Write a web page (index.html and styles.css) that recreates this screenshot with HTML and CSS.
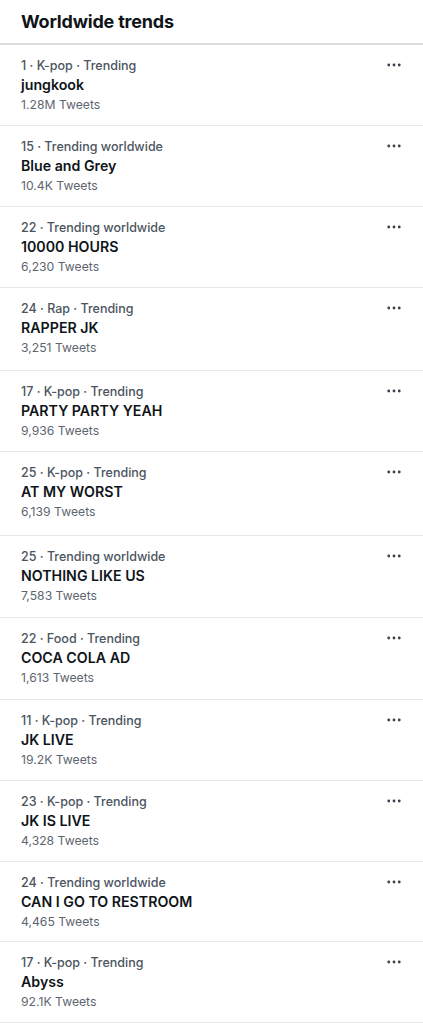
FILE: index.html
```html
<!DOCTYPE html>
<html lang="en">
<head>
    <meta charset="UTF-8">
    <meta name="viewport" content="width=device-width, initial-scale=1.0">
    <title>Worldwide trends</title>
    <link rel="stylesheet" href="styles.css">
</head>
<body>
    <div class="container">
        <div class="header">
            <h1>Worldwide trends</h1>
        </div>
        <div class="trends">
            <div class="trend">
                <div class="info">
                    <span class="meta">1 · K-pop · Trending</span>
                    <span class="name">jungkook</span>
                    <span class="count">1.28M Tweets</span>
                </div>
                <svg class="more" viewBox="0 0 16 4"><circle cx="2" cy="2" r="1.6"/><circle cx="8" cy="2" r="1.6"/><circle cx="14" cy="2" r="1.6"/></svg>
            </div>
            <div class="trend">
                <div class="info">
                    <span class="meta">15 · Trending worldwide</span>
                    <span class="name">Blue and Grey</span>
                    <span class="count">10.4K Tweets</span>
                </div>
                <svg class="more" viewBox="0 0 16 4"><circle cx="2" cy="2" r="1.6"/><circle cx="8" cy="2" r="1.6"/><circle cx="14" cy="2" r="1.6"/></svg>
            </div>
            <div class="trend">
                <div class="info">
                    <span class="meta">22 · Trending worldwide</span>
                    <span class="name">10000 HOURS</span>
                    <span class="count">6,230 Tweets</span>
                </div>
                <svg class="more" viewBox="0 0 16 4"><circle cx="2" cy="2" r="1.6"/><circle cx="8" cy="2" r="1.6"/><circle cx="14" cy="2" r="1.6"/></svg>
            </div>
            <div class="trend tall">
                <div class="info">
                    <span class="meta">24 · Rap · Trending</span>
                    <span class="name">RAPPER JK</span>
                    <span class="count">3,251 Tweets</span>
                </div>
                <svg class="more" viewBox="0 0 16 4"><circle cx="2" cy="2" r="1.6"/><circle cx="8" cy="2" r="1.6"/><circle cx="14" cy="2" r="1.6"/></svg>
            </div>
            <div class="trend">
                <div class="info">
                    <span class="meta">17 · K-pop · Trending</span>
                    <span class="name">PARTY PARTY YEAH</span>
                    <span class="count">9,936 Tweets</span>
                </div>
                <svg class="more" viewBox="0 0 16 4"><circle cx="2" cy="2" r="1.6"/><circle cx="8" cy="2" r="1.6"/><circle cx="14" cy="2" r="1.6"/></svg>
            </div>
            <div class="trend taller">
                <div class="info">
                    <span class="meta">25 · K-pop · Trending</span>
                    <span class="name">AT MY WORST</span>
                    <span class="count">6,139 Tweets</span>
                </div>
                <svg class="more" viewBox="0 0 16 4"><circle cx="2" cy="2" r="1.6"/><circle cx="8" cy="2" r="1.6"/><circle cx="14" cy="2" r="1.6"/></svg>
            </div>
            <div class="trend slight">
                <div class="info">
                    <span class="meta">25 · Trending worldwide</span>
                    <span class="name">NOTHING LIKE US</span>
                    <span class="count">7,583 Tweets</span>
                </div>
                <svg class="more" viewBox="0 0 16 4"><circle cx="2" cy="2" r="1.6"/><circle cx="8" cy="2" r="1.6"/><circle cx="14" cy="2" r="1.6"/></svg>
            </div>
            <div class="trend slight">
                <div class="info">
                    <span class="meta">22 · Food · Trending</span>
                    <span class="name">COCA COLA AD</span>
                    <span class="count">1,613 Tweets</span>
                </div>
                <svg class="more" viewBox="0 0 16 4"><circle cx="2" cy="2" r="1.6"/><circle cx="8" cy="2" r="1.6"/><circle cx="14" cy="2" r="1.6"/></svg>
            </div>
            <div class="trend">
                <div class="info">
                    <span class="meta">11 · K-pop · Trending</span>
                    <span class="name">JK LIVE</span>
                    <span class="count">19.2K Tweets</span>
                </div>
                <svg class="more" viewBox="0 0 16 4"><circle cx="2" cy="2" r="1.6"/><circle cx="8" cy="2" r="1.6"/><circle cx="14" cy="2" r="1.6"/></svg>
            </div>
            <div class="trend">
                <div class="info">
                    <span class="meta">23 · K-pop · Trending</span>
                    <span class="name">JK IS LIVE</span>
                    <span class="count">4,328 Tweets</span>
                </div>
                <svg class="more" viewBox="0 0 16 4"><circle cx="2" cy="2" r="1.6"/><circle cx="8" cy="2" r="1.6"/><circle cx="14" cy="2" r="1.6"/></svg>
            </div>
            <div class="trend short">
                <div class="info">
                    <span class="meta">24 · Trending worldwide</span>
                    <span class="name">CAN I GO TO RESTROOM</span>
                    <span class="count">4,465 Tweets</span>
                </div>
                <svg class="more" viewBox="0 0 16 4"><circle cx="2" cy="2" r="1.6"/><circle cx="8" cy="2" r="1.6"/><circle cx="14" cy="2" r="1.6"/></svg>
            </div>
            <div class="trend">
                <div class="info">
                    <span class="meta">17 · K-pop · Trending</span>
                    <span class="name">Abyss</span>
                    <span class="count">92.1K Tweets</span>
                </div>
                <svg class="more" viewBox="0 0 16 4"><circle cx="2" cy="2" r="1.6"/><circle cx="8" cy="2" r="1.6"/><circle cx="14" cy="2" r="1.6"/></svg>
            </div>
        </div>
    </div>
</body>
</html>
```

FILE: styles.css
```css
body{
    margin: 0;
    background-color: white;
    font-family: Inter, "Noto Sans", sans-serif;
    color: #0f1419;
}
.header{
    height: 43px;
    display: flex;
    align-items: center;
    padding: 0 21px;
    border-bottom: 2px solid #dcdee0;
}
.header h1{
    margin: 0;
    font-size: 18px;
    font-weight: 700;
    letter-spacing: -0.2px;
}
.trend{
    display: flex;
    justify-content: space-between;
    align-items: flex-start;
    padding: 12px 22px 11px 21px;
    border-bottom: 1px solid #e7e8ea;
}
.trend.tall{
    padding-bottom: 13px;
}
.trend.taller{
    padding-bottom: 14px;
}
.trend.slight{
    padding-bottom: 12px;
}
.trend.short{
    padding-bottom: 10px;
}
.info{
    display: flex;
    flex-direction: column;
}
.meta{
    font-size: 12.5px;
    line-height: 17px;
    font-weight: 500;
    color: #4b5460;
}
.name{
    font-size: 14.2px;
    line-height: 20px;
    font-weight: 600;
    margin-top: 1px;
}
.count{
    font-size: 12.2px;
    line-height: 18px;
    margin-top: 1px;
    color: #5d6570;
}
.more{
    width: 14px;
    height: 4px;
    margin-top: 6px;
    fill: #3a4048;
}
```
